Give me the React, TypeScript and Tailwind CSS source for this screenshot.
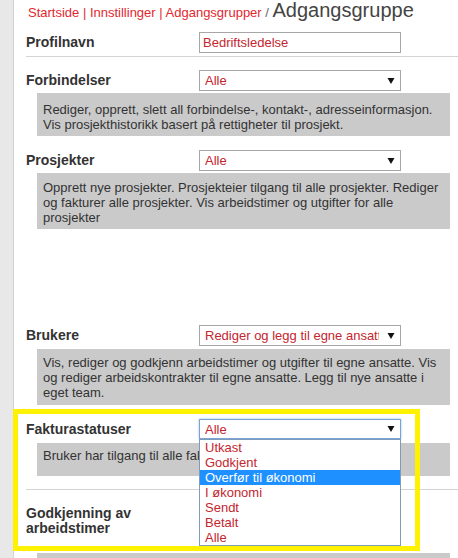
import React from "react";

const Arrow = () => (
  <svg width="8" height="7" viewBox="0 0 8 7" className="absolute right-[5px] top-1/2 -translate-y-1/2">
    <path d="M0.5 0.5 L7.5 0.5 L4 6.5 Z" fill="#111" />
  </svg>
);

function Select({ value, focused = false, h = "h-[21px]" }: { value: string; focused?: boolean; h?: string }) {
  return (
    <div
      className={`relative w-[202px] ${h} shrink-0 border bg-white ${
        focused ? "border-[#7aa2d6] shadow-[0_0_2px_#9cc0f0]" : "border-[#a6a6a6]"
      } flex items-center`}
    >
      <div className="ml-[5px] w-[174px] overflow-hidden whitespace-nowrap text-[13px] leading-[15px] text-[#c4262e]">
        {value}
      </div>
      <Arrow />
    </div>
  );
}

function Desc({ children, cls }: { children?: React.ReactNode; cls: string }) {
  return (
    <div className={`ml-[11px] mr-[8px] bg-[#cacaca] pl-[6px] pr-[6px] text-[13px] leading-[15px] text-[#333] ${cls}`}>
      {children}
    </div>
  );
}

function Label({ children, cls = "" }: { children: React.ReactNode; cls?: string }) {
  return <div className={`w-[173px] shrink-0 font-bold text-[14px] leading-[15px] text-[#333] ${cls}`}>{children}</div>;
}

export default function App() {
  const items = ["Utkast", "Godkjent", "Overfør til økonomi", "I økonomi", "Sendt", "Betalt", "Alle"];
  return (
    <div
      className="relative flex w-[458px] h-[558px] overflow-hidden bg-white"
      style={{ fontFamily: '"Liberation Sans", Arial, sans-serif' }}
    >
      <div className="w-[14px] shrink-0 bg-[#e8e8e8] border-r border-[#d2d2d2]" />
      <div className="flex-1 pl-[12px]">
        {/* breadcrumb */}
        <div className="h-[20px] leading-[20px] pl-[2px] whitespace-nowrap">
          <span className="text-[13px] text-[#e2282e]">Startside | Innstillinger | Adgangsgrupper </span>
          <span className="text-[13px] text-[#666]">/ </span>
          <span className="text-[20px] text-[#444]">Adgangsgruppe</span>
        </div>

        {/* Profilnavn */}
        <div className="mt-[12px] flex items-center h-[21px]">
          <Label>Profilnavn</Label>
          <div className="w-[202px] h-[21px] border border-[#a6a6a6] flex items-center pl-[3px] text-[13px] text-[#c4262e]">
            Bedriftsledelse
          </div>
        </div>
        <div className="mt-[3px] border-t border-[#d4d4d4]" />

        {/* Forbindelser */}
        <div className="mt-[13px] flex items-center">
          <Label>Forbindelser</Label>
          <Select value="Alle" />
        </div>
        <Desc cls="mt-[2px] pt-[9px] pb-[4px]">
          Rediger, opprett, slett all forbindelse-, kontakt-, adresseinformasjon. Vis prosjekthistorikk basert på rettigheter til prosjekt.
        </Desc>

        {/* Prosjekter */}
        <div className="mt-[14px] flex items-center">
          <Label>Prosjekter</Label>
          <Select value="Alle" />
        </div>
        <Desc cls="mt-[2px] pt-[7px] pb-[4px]">
          Opprett nye prosjekter. Prosjekteier tilgang til alle prosjekter. Rediger og fakturer alle prosjekter. Vis arbeidstimer og utgifter for alle prosjekter
        </Desc>

        {/* Brukere */}
        <div className="mt-[96px] flex items-center">
          <Label>Brukere</Label>
          <Select value="Rediger og legg til egne ansatte" />
        </div>
        <Desc cls="mt-[3px] pt-[6px] pb-[5px]">
          Vis, rediger og godkjenn arbeidstimer og utgifter til egne ansatte. Vis og rediger arbeidskontrakter til egne ansatte. Legg til nye ansatte i eget team.
        </Desc>

        {/* Fakturastatuser */}
        <div className="mt-[14px] flex items-center relative z-20">
          <Label>Fakturastatuser</Label>
          <div className="relative">
            <Select value="Alle" focused h="h-[20px]" />
            <div className="absolute left-0 top-full w-[202px] border border-[#7f9db9] bg-white">
              {items.map((it) => (
                <div
                  key={it}
                  className={`h-[15px] leading-[15px] pl-[5px] text-[13px] whitespace-nowrap ${
                    it === "Overfør til økonomi" ? "bg-[#1e90ff] text-white" : "text-[#c4262e]"
                  }`}
                >
                  {it}
                </div>
              ))}
            </div>
          </div>
        </div>
        <Desc cls="mt-[4px] h-[33px] pt-[5px] whitespace-nowrap overflow-hidden">Bruker har tilgang til alle fakturastatuser</Desc>
        <div className="mt-[13px] border-t border-[#d4d4d4]" />

        {/* Godkjenning */}
        <div className="mt-[13px] flex items-start h-[33px]">
          <Label cls="mt-[3px]">
            Godkjenning av
            <br />
            arbeidstimer
          </Label>
          <Select value="" h="h-[22px]" />
        </div>
        <Desc cls="mt-[17px] h-[30px]" />
      </div>

      {/* yellow highlight */}
      <div className="absolute left-[13px] top-[409px] w-[407px] h-[142px] border-[5px] border-[#fff200] pointer-events-none z-30" />
    </div>
  );
}
